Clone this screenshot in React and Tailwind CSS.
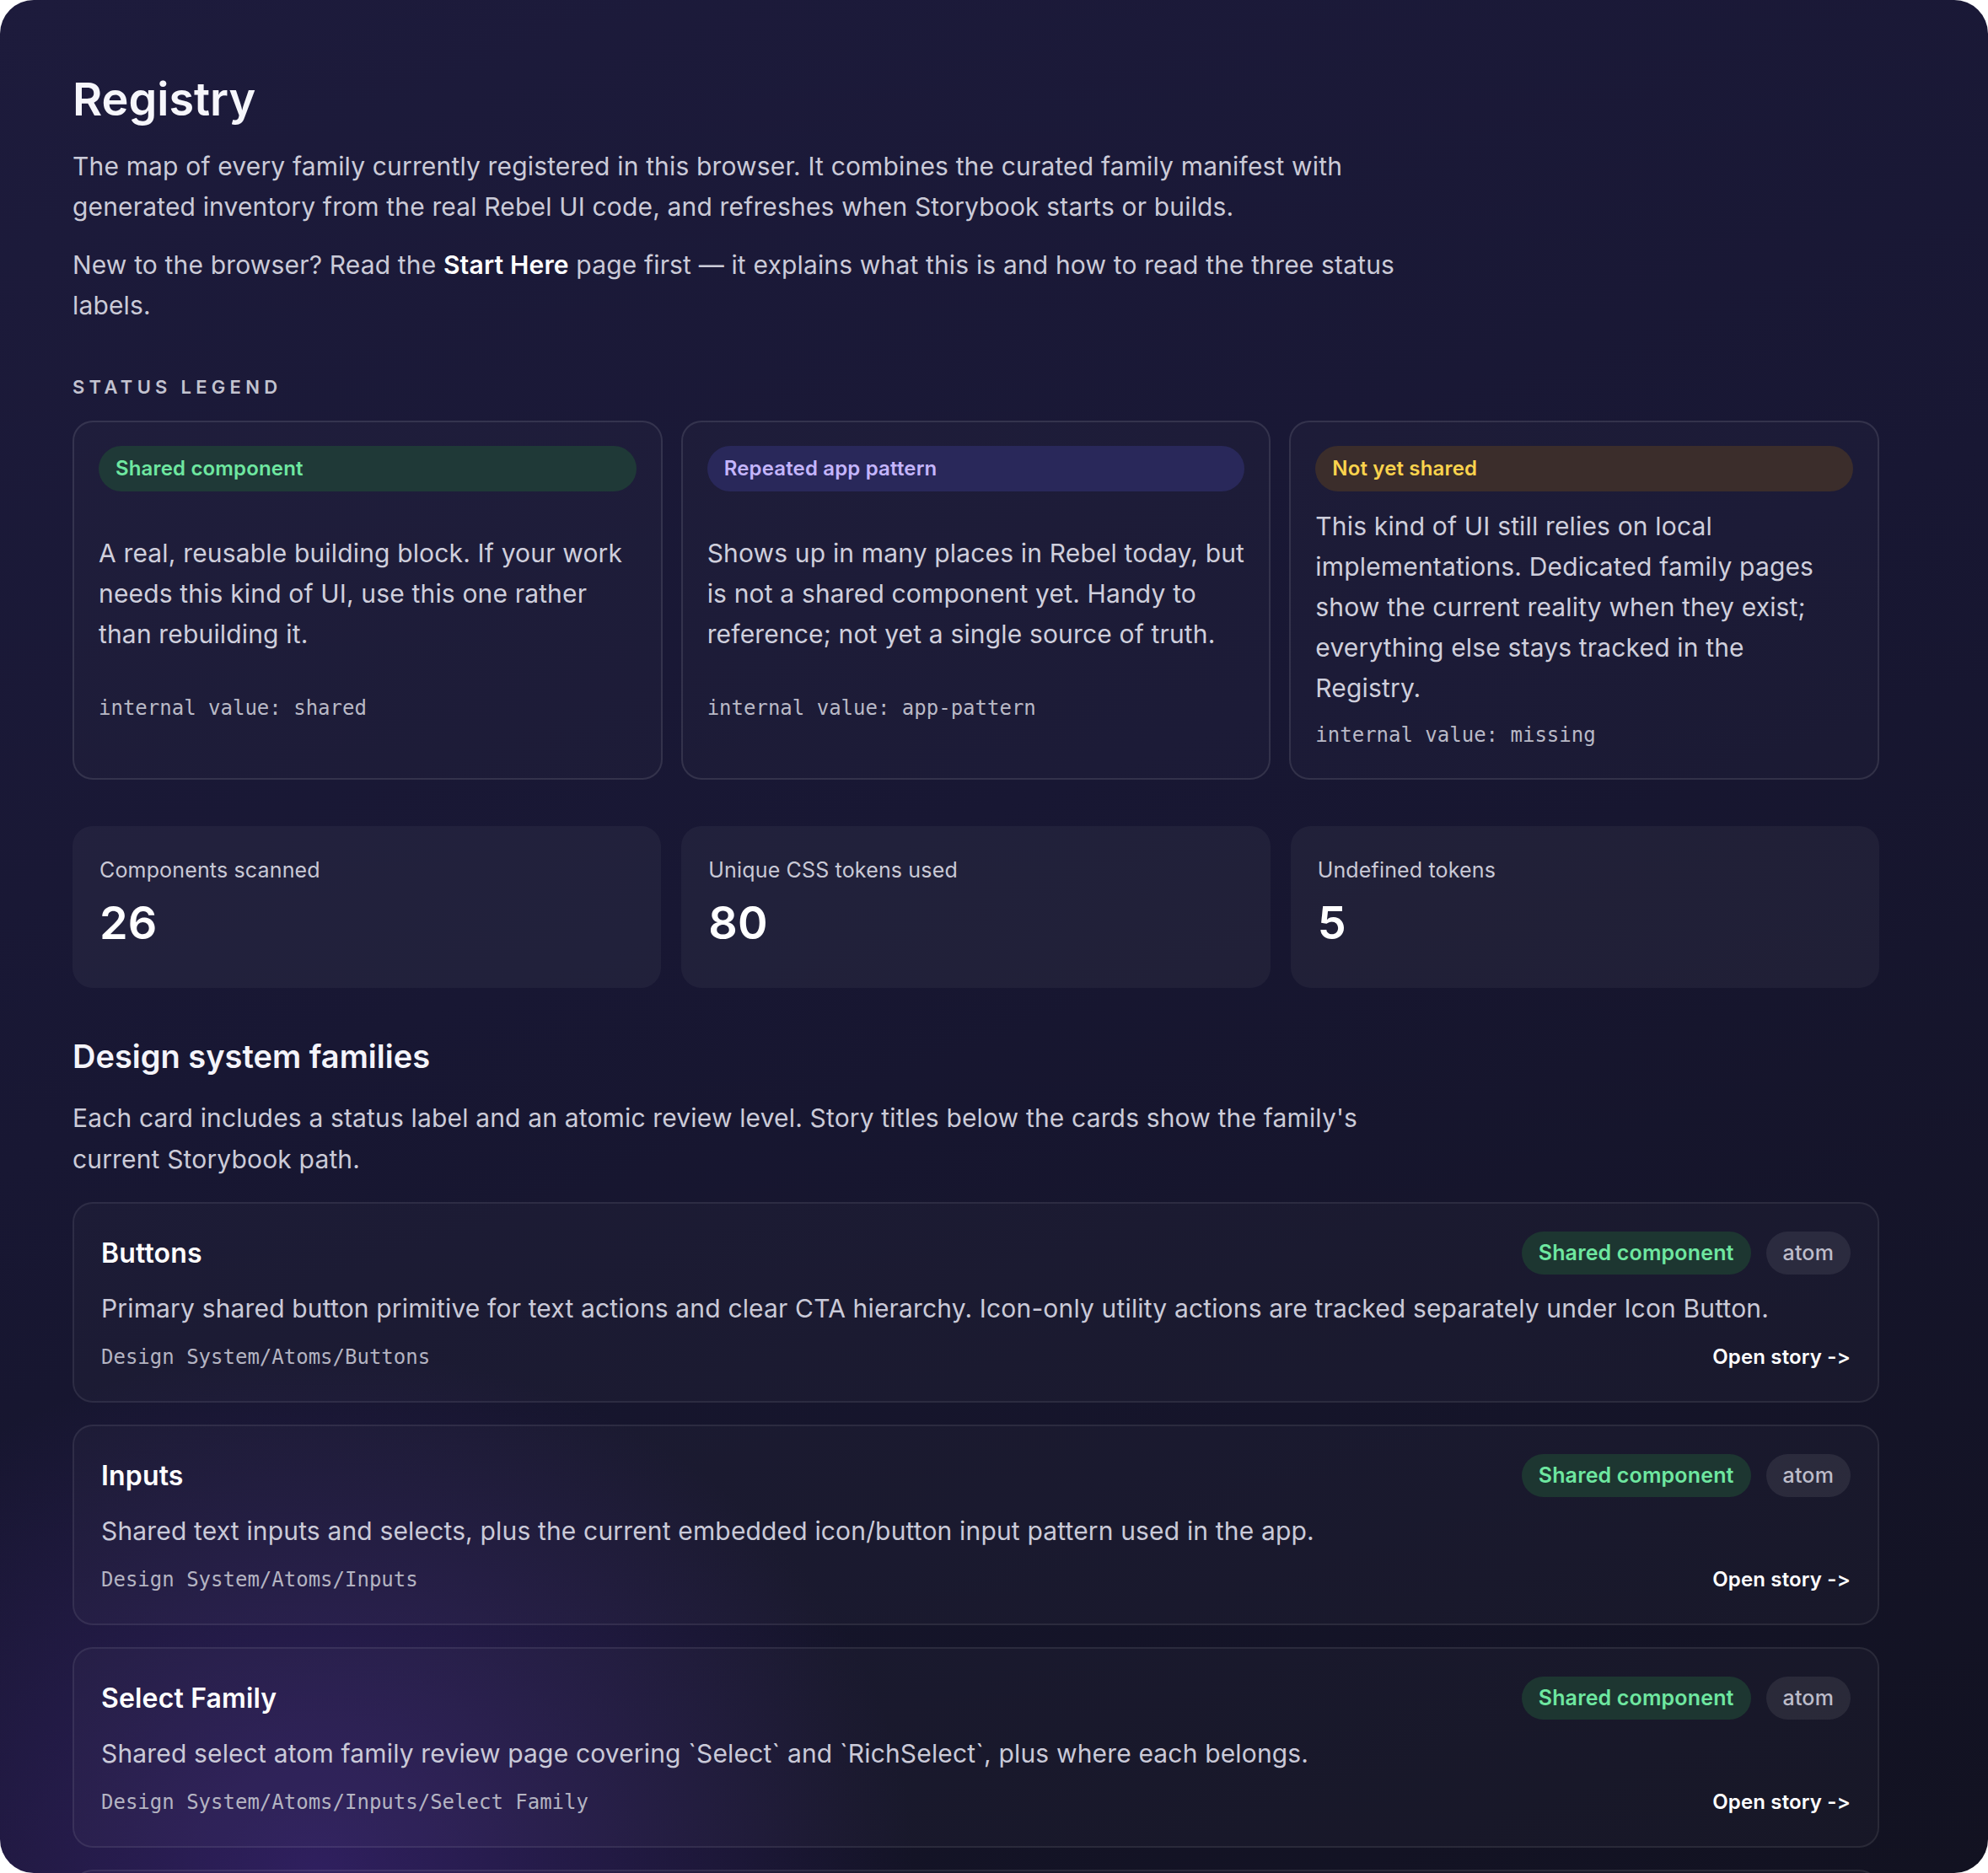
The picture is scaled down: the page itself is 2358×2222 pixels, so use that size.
const legend = [
  {
    label: "Shared component",
    pill: "bg-[#1f3937] text-[#6ee7a0]",
    text: "A real, reusable building block. If your work needs this kind of UI, use this one rather than rebuilding it.",
    value: "shared",
  },
  {
    label: "Repeated app pattern",
    pill: "bg-[#29285a] text-[#c4b5fd]",
    text: "Shows up in many places in Rebel today, but is not a shared component yet. Handy to reference; not yet a single source of truth.",
    value: "app-pattern",
  },
  {
    label: "Not yet shared",
    pill: "bg-[#3b2d2b] text-[#fcd34d]",
    text: "This kind of UI still relies on local implementations. Dedicated family pages show the current reality when they exist; everything else stays tracked in the Registry.",
    value: "missing",
  },
];

const stats = [
  { label: "Components scanned", value: "26" },
  { label: "Unique CSS tokens used", value: "80" },
  { label: "Undefined tokens", value: "5" },
];

const families = [
  {
    name: "Buttons",
    desc: "Primary shared button primitive for text actions and clear CTA hierarchy. Icon-only utility actions are tracked separately under Icon Button.",
    path: "Design System/Atoms/Buttons",
  },
  {
    name: "Inputs",
    desc: "Shared text inputs and selects, plus the current embedded icon/button input pattern used in the app.",
    path: "Design System/Atoms/Inputs",
  },
  {
    name: "Select Family",
    desc: "Shared select atom family review page covering `Select` and `RichSelect`, plus where each belongs.",
    path: "Design System/Atoms/Inputs/Select Family",
  },
  {
    name: "Icon Button",
    desc: "Icon-only utility actions.",
    path: "Design System/Atoms/Icon Button",
  },
];

const mono = "font-['DejaVu_Sans_Mono',monospace] tracking-normal";

function LegendCard({ item }) {
  return (
    <div className="flex flex-col rounded-[24px] border-2 border-white/10 bg-white/[0.02] px-[29px] pt-[28px] pb-[33px]">
      <div className={`flex h-[54px] items-center rounded-full px-[20px] text-[24px] font-semibold ${item.pill}`}>
        {item.label}
      </div>
      <div className="flex flex-1 flex-col justify-evenly">
        <p className="mt-[17px] text-[30px] leading-[48px] text-[#cfcfdc]">{item.text}</p>
        <p className={`mt-[14px] text-[24px] leading-[36px] text-[#b9b9c6] ${mono}`}>
          internal value: {item.value}
        </p>
      </div>
    </div>
  );
}

function StatCard({ item }) {
  return (
    <div className="rounded-[24px] bg-white/[0.045] px-[32px] pt-[34px] pb-[47px]">
      <div className="text-[25px] leading-[36px] text-[#c9c9d6]">{item.label}</div>
      <div className="mt-[15px] text-[54px] font-semibold leading-[60px] text-white">{item.value}</div>
    </div>
  );
}

function FamilyCard({ item }) {
  return (
    <div className="rounded-[24px] border-2 border-white/[0.08] bg-white/[0.025] px-[32px] pt-[33px] pb-[34px]">
      <div className="flex items-center justify-between">
        <h3 className="text-[32px] font-semibold leading-[40px] text-white">{item.name}</h3>
        <div className="flex items-center gap-[18px]">
          <span className="flex h-[51px] items-center rounded-full bg-[#1d3631] px-[20px] text-[25px] font-semibold text-[#6ee7a0]">
            Shared component
          </span>
          <span className="flex h-[51px] items-center rounded-full bg-white/[0.08] px-[20px] text-[25px] font-medium text-[#bdbdca]">
            atom
          </span>
        </div>
      </div>
      <p className="mt-[18px] text-[30px] leading-[45px] text-[#cacad8]">{item.desc}</p>
      <div className="mt-[17px] flex items-center justify-between">
        <span className={`text-[24px] leading-[36px] text-[#b4b4c2] ${mono}`}>{item.path}</span>
        <span className="text-[24px] font-semibold leading-[36px] text-white [font-feature-settings:'calt'_0,'liga'_0]">
          Open story -&gt;
        </span>
      </div>
    </div>
  );
}

export default function App() {
  return (
    <div className="bg-white font-['Inter',sans-serif] tracking-[0.01em]">
      <div className="h-[2222px] overflow-hidden rounded-[40px] bg-[image:radial-gradient(ellipse_30%_28%_at_16%_100%,rgba(80,45,160,0.45),transparent),linear-gradient(160deg,#1d1b3c_0%,#181733_45%,#121221_100%)] pl-[86px] pt-[85px]">
        <div className="w-[2143px]">
          <h1 className="text-[54px] font-semibold leading-[66px] tracking-normal text-[#f6f6fb]">Registry</h1>
          <div className="max-w-[1600px] text-[30px] leading-[48px] text-[#cbcbd8]">
            <p className="mt-[22px]">
              The map of every family currently registered in this browser. It combines the curated family manifest with
              generated inventory from the real Rebel UI code, and refreshes when Storybook starts or builds.
            </p>
            <p className="mt-[21px]">
              New to the browser? Read the <strong className="font-semibold text-white">Start Here</strong> page first — it
              explains what this is and how to read the three status labels.
            </p>
          </div>

          <div className="mt-[58px] text-[22px] font-semibold uppercase leading-[30px] tracking-[0.24em] text-[#c3c3d0]">
            Status legend
          </div>
          <div className="mt-[25px] grid grid-cols-3 gap-[22px]">
            {legend.map((item) => (
              <LegendCard key={item.value} item={item} />
            ))}
          </div>

          <div className="mt-[55px] grid grid-cols-3 gap-[24px]">
            {stats.map((item) => (
              <StatCard key={item.label} item={item} />
            ))}
          </div>

          <h2 className="mt-[57px] text-[38px] font-semibold leading-[48px] tracking-normal text-[#f4f4fa]">
            Design system families
          </h2>
          <p className="mt-[25px] max-w-[1600px] text-[30px] leading-[49px] text-[#cbcbd8]">
            Each card includes a status label and an atomic review level. Story titles below the cards show the family's
            current Storybook path.
          </p>

          <div className="mt-[26px] flex flex-col gap-[26px]">
            {families.map((item) => (
              <FamilyCard key={item.name} item={item} />
            ))}
          </div>
        </div>
      </div>
    </div>
  );
}
